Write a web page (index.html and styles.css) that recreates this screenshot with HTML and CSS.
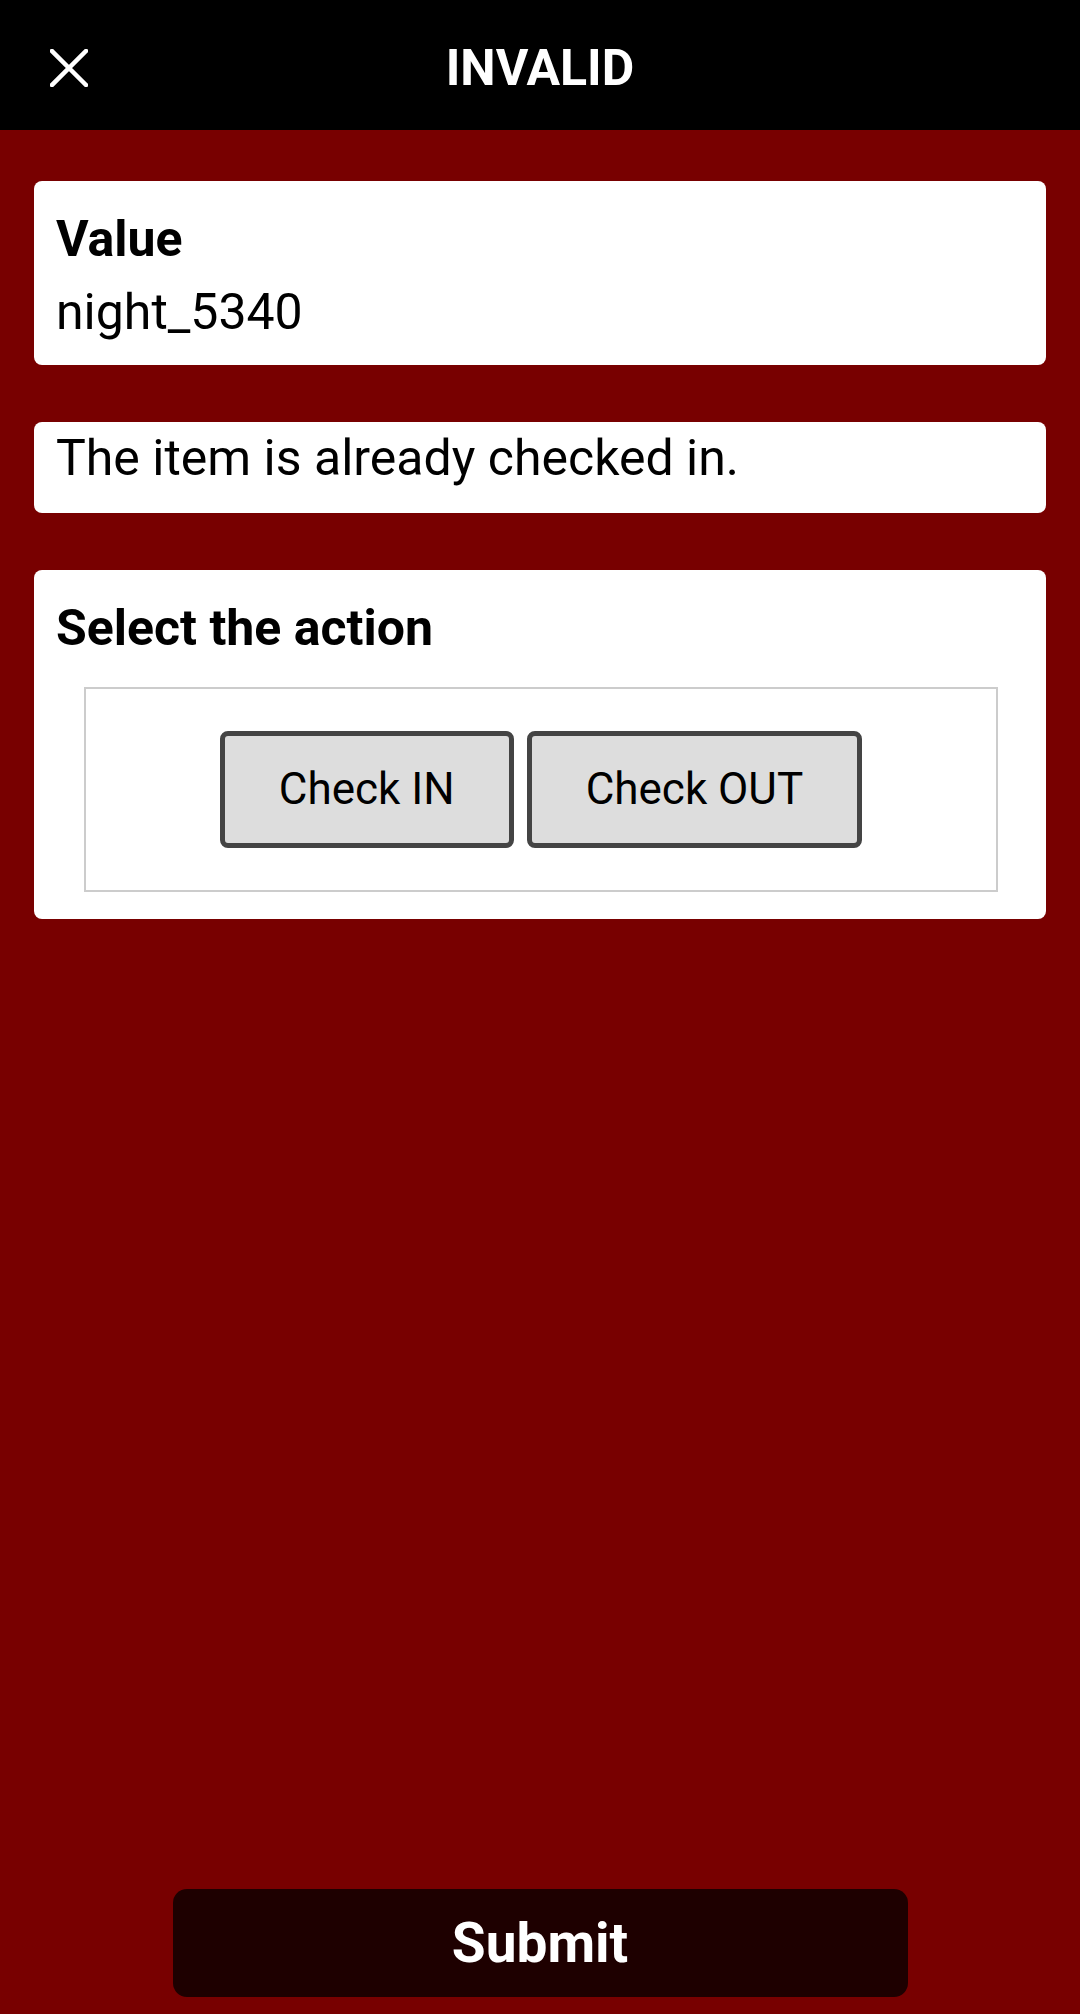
FILE: index.html
```html
<!DOCTYPE html>
<html lang="en">
<head>
  <meta charset="UTF-8">
  <title>INVALID</title>
  <link rel="stylesheet" href="styles.css">
</head>
<body>
  <header class="topbar">
    <button class="close" aria-label="Close">
      <svg width="38" height="38" viewBox="0 0 38 38">
        <path d="M2 2 L36 36 M36 2 L2 36" stroke="#fff" stroke-width="4.5" stroke-linecap="square" fill="none"/>
      </svg>
    </button>
    <h1 class="title">INVALID</h1>
    <span></span>
  </header>

  <main class="content">
    <div class="card value-card">
      <div class="label">Value</div>
      <div class="value">night_5340</div>
    </div>

    <div class="card message-card">The item is already checked in.</div>

    <div class="card action-card">
      <div class="label">Select the action</div>
      <div class="action-box">
        <button class="action">Check IN</button>
        <button class="action">Check OUT</button>
      </div>
    </div>
  </main>

  <footer class="bottom">
    <button class="submit">Submit</button>
  </footer>
</body>
</html>
```

FILE: styles.css
```css
html, body {
  height: 100%;
}
body {
  margin: 0;
  font-family: Roboto, "Noto Sans", Arial, sans-serif;
  background-color: #780000;
  color: #000;
  display: flex;
  flex-direction: column;
  min-height: 2014px;
}
.topbar {
  height: 130px;
  box-sizing: border-box;
  padding-top: 5px;
  background-color: #000;
  display: grid;
  grid-template-columns: 1fr auto 1fr;
  align-items: center;
}
.close {
  justify-self: start;
  margin-left: 50px;
  padding: 0;
  border: none;
  background: none;
  width: 38px;
  height: 38px;
  display: flex;
}
.title {
  margin: 0;
  color: #fff;
  font-size: 50px;
  font-weight: bold;
}
.content {
  flex: 1;
  padding: 51px 34px 0;
  display: flex;
  flex-direction: column;
  gap: 57px;
}
.card {
  background-color: #fff;
  border-radius: 8px;
  padding: 0 22px;
}
.label {
  font-size: 50px;
  font-weight: bold;
}
.value-card {
  padding-top: 29px;
  padding-bottom: 24px;
}
.value {
  font-size: 50px;
  margin-top: 15px;
}
.message-card {
  font-size: 50px;
  padding-top: 7px;
  padding-bottom: 26px;
}
.action-card {
  padding-top: 29px;
  padding-bottom: 27px;
}
.action-box {
  margin: 30px 26px 0 28px;
  border: 2px solid #ccc;
  padding: 42px 0;
  display: flex;
  justify-content: center;
  gap: 13px;
}
.action {
  font-family: Roboto, "Noto Sans", Arial, sans-serif;
  font-size: 44px;
  line-height: 53px;
  padding: 27px 54px;
  color: #000;
  background-color: #ddd;
  border: 5px solid #444;
  border-radius: 8px;
}
.bottom {
  display: flex;
  justify-content: center;
  padding-bottom: 17px;
}
.submit {
  width: 735px;
  height: 108px;
  font-family: Roboto, "Noto Sans", Arial, sans-serif;
  font-size: 55px;
  font-weight: bold;
  color: #fff;
  background-color: #1e0000;
  border: none;
  border-radius: 14px;
}
```
